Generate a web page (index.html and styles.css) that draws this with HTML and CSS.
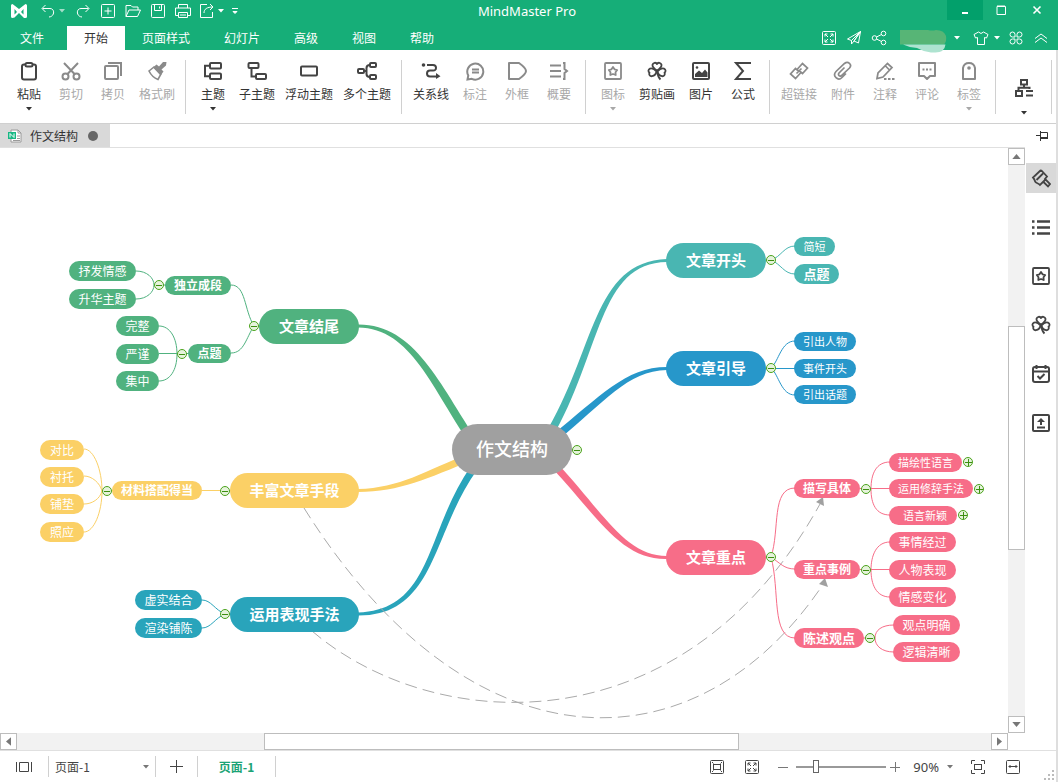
FILE: index.html
```html
<!DOCTYPE html>
<html lang="zh-CN">
<head>
<meta charset="utf-8">
<title>MindMaster Pro</title>
<link rel="stylesheet" href="styles.css">
</head>
<body>
<svg class="defs" aria-hidden="true">
  <symbol id="caret" viewBox="0 0 6 4"><path d="M0 0h6L3 3.500z" fill="currentColor"/></symbol>
  <symbol id="clover" viewBox="0 0 20 20"><g fill="none" stroke="currentColor" stroke-width="1.800" stroke-linejoin="round"><path d="M10 9.500C7 7.500 5.200 5.500 5.500 3.800 6 1.500 9 1 10 3c1-2 4-1.500 4.500.8.300 1.700-1.500 3.700-4.500 5.700z"/><path d="M9.500 10.500C7 7.500 5 7 3 7.600 1 8.500 1 10.800 2.500 11.600 1.500 13.500 3 15.500 5 15.200c2.500-.4 4-2.200 4.500-4.700z"/><path d="M10.500 10.500C13 7.500 15 7 17 7.600c2 .9 2 3.200.5 4 1 1.900-.5 3.900-2.500 3.600-2.500-.4-4-2.200-4.500-4.700z"/><path d="M10 10c.5 3.500 1.500 6.500 3.500 8.500"/></g></symbol>
  <symbol id="starbox" viewBox="0 0 20 20"><g fill="none" stroke="currentColor" stroke-width="1.800" stroke-linejoin="round"><rect x="2" y="2" width="16" height="16" rx="1"/><path d="M10 6l1.500 2.300 2.700.7-1.700 2.200.2 2.800L10 13l-2.700 1 .2-2.800L5.800 9l2.700-.7z"/></g></symbol>
</svg>
<div class="app">
  <header class="header">
    <div class="titlebar">
      <div class="quick">
        <svg class="logo" viewBox="0 0 16 14"><path d="M1.500 0L8 5 14.500 0Q16 0 16 1.500V12.500Q16 14 14.500 14H13L8 9 3.500 13.500 1.500 14Q0 14 0 12.500V1.500Q0 0 1.500 0z" fill="#fff"/><path d="M3.500 5v5.500L6 8zM12.500 5v5.500L10 8z" fill="#16ae78"/></svg>
        <button class="q q-undo" aria-label="撤销"><svg viewBox="0 0 16 16"><path d="M5.500 2L2 5.500 5.500 9M2.500 5.500H10c5 0 5 8-1 8.500"/></svg></button>
        <button class="q q-caret dim" aria-label="撤销列表"><svg class="caret"><use href="#caret"/></svg></button>
        <button class="q q-redo" aria-label="重做"><svg viewBox="0 0 16 16"><path d="M10.500 2L14 5.500 10.500 9M13.500 5.500H6c-5 0-5 8 1 8.500"/></svg></button>
        <button class="q" aria-label="新建"><svg viewBox="0 0 16 16"><rect x="1.500" y="1.500" width="13" height="13" rx="1"/><path d="M8 4.500v7M4.500 8h7"/></svg></button>
        <button class="q" aria-label="打开"><svg viewBox="0 0 16 16"><path d="M1 13.500v-11h5L7.500 4H13v3M1 13.500L4 7h11.500l-3 6.500z"/></svg></button>
        <button class="q" aria-label="保存"><svg viewBox="0 0 16 16"><rect x="1.500" y="1.500" width="13" height="13" rx="1"/><path d="M4.500 1.500v6h7v-6M9.500 3.500v2"/></svg></button>
        <button class="q" aria-label="打印"><svg viewBox="0 0 16 16"><path d="M3.500 5V1.500h9V5M3.500 12.500h-3V5h15v7.500h-3M3.500 9.500h9v5h-9zM5 12h6"/></svg></button>
        <button class="q q-share" aria-label="导出"><svg viewBox="0 0 16 16"><path d="M8 1.500H1.500v13h12V9M5 10c0-4 3-6 9-6M11 1l3 3-3 3"/></svg></button>
        <button class="q q-caret" aria-label="导出列表"><svg class="caret"><use href="#caret"/></svg></button>
        <button class="q q-more" aria-label="自定义"><svg viewBox="0 0 6 7"><path d="M0 .5h6M1 3.500h4L3 5.500z" fill="#fff"/></svg></button>
      </div>
      <h1 class="title">MindMaster Pro</h1>
      <div class="window-buttons">
        <button class="wb wb-min" aria-label="最小化"><svg viewBox="0 0 12 12"><path d="M3 9h6" stroke-width="2"/></svg></button>
        <button class="wb" aria-label="最大化"><svg viewBox="0 0 12 12"><path d="M2 2.500h8.500v8H2z"/><path d="M2 2h8" /></svg></button>
        <button class="wb" aria-label="关闭"><svg viewBox="0 0 12 12"><path d="M2.500 2.500l7 7M9.500 2.500l-7 7" stroke-width="1.600"/></svg></button>
      </div>
    </div>
    <div class="menubar">
      <nav class="menus">
        <a class="menu menu-file" href="#file">文件</a>
        <a class="menu active" href="#start">开始</a>
        <a class="menu" href="#style">页面样式</a>
        <a class="menu" href="#slides">幻灯片</a>
        <a class="menu" href="#advanced">高级</a>
        <a class="menu" href="#view">视图</a>
        <a class="menu" href="#help">帮助</a>
      </nav>
      <div class="account">
        <button class="q" aria-label="全屏"><svg viewBox="0 0 16 16"><rect x="1.500" y="1.500" width="13" height="13" rx="1"/><path d="M4 6.500V4h2.500M9.500 4H12v2.500M12 9.500V12H9.500M6.500 12H4V9.500M4 4l3 3M12 4L9 7M12 12L9 9M4 12l3-3"/></svg></button>
        <button class="q" aria-label="发送"><svg viewBox="0 0 16 16"><path d="M14.500 1.500L1.500 9l4 1.500zM14.500 1.500L12.500 13 8 11zM5.500 10.500V14L8 11l6.500-9.500"/></svg></button>
        <button class="q" aria-label="分享"><svg viewBox="0 0 16 16"><circle cx="3.500" cy="8" r="2.300"/><circle cx="12.500" cy="3.500" r="2.300"/><circle cx="12.500" cy="12.500" r="2.300"/><path d="M5.500 7l5-2.500M5.500 9l5 2.500"/></svg></button>
        <button class="user" aria-label="用户"><svg viewBox="0 0 48 24"><path d="M0 1h28q4 1 8 0 8 0 10 6 1 5-2 8.500H0z" fill="#57b576"/><path d="M3 15.500h42.500q-1 8-10 8H31q-8-1-14-4.500-8-.5-14-3.500z" fill="#aee3d0"/></svg></button>
        <button class="q q-caret" aria-label="用户菜单"><svg class="caret"><use href="#caret"/></svg></button>
        <button class="q q-skin" aria-label="皮肤"><svg viewBox="0 0 16 16"><path d="M5.500 2L1 4.500 2.500 8l2-.5v7h7v-7l2 .5L15 4.500 10.500 2Q8 5 5.500 2z"/></svg></button>
        <button class="q q-caret" aria-label="皮肤菜单"><svg class="caret"><use href="#caret"/></svg></button>
        <button class="q q-apps" aria-label="应用"><svg viewBox="0 0 16 16"><path d="M7 7H4.500A2.500 2.500 0 1 1 7 4.500zM9 7h2.500A2.500 2.500 0 1 0 9 4.500zM7 9H4.500A2.500 2.500 0 1 0 7 11.500zM9 9h2.500A2.500 2.500 0 1 1 9 11.500z"/></svg></button>
        <button class="q" aria-label="折叠功能区"><svg viewBox="0 0 16 16"><path d="M2 8.500L8 4l6 4.500M2 12.500L8 8l6 4.500"/></svg></button>
      </div>
    </div>
  </header>

  <div class="body">
    <div class="ribbon">
      <div class="group">
        <button class="tool"><svg class="ico" viewBox="0 0 20 20"><rect x="3" y="3.500" width="14" height="15" rx="2"/><rect x="6.500" y="2" width="7" height="3.500" rx="1.500" fill="#fff"/></svg><span>粘贴</span><svg class="caret"><use href="#caret"/></svg></button>
        <button class="tool off"><svg class="ico" viewBox="0 0 20 20"><circle cx="4.500" cy="15.500" r="3"/><circle cx="15.500" cy="15.500" r="3"/><path d="M3 2l10.500 11M17 2L6.500 13"/></svg><span>剪切</span></button>
        <button class="tool off"><svg class="ico" viewBox="0 0 20 20"><rect x="2" y="5" width="13" height="13" rx="1"/><path d="M5 2h13v13"/></svg><span>拷贝</span></button>
        <button class="tool w3 off"><svg class="ico" viewBox="0 0 20 20"><path d="M2 10L7 6l7 7-3 5.500C7 17 4 14 2 10z" stroke-width="1.600"/><path d="M6 6.500l3.500-3 2.500 2 4-4.500h3.500L19 4.500l-4.500 4 2 2-3 4z" fill="currentColor" stroke="none"/></svg><span>格式刷</span></button>
      </div>
      <div class="group">
        <button class="tool"><svg class="ico" viewBox="0 0 20 20"><rect x="7" y="2" width="11" height="5.500" rx="1"/><rect x="7" y="12.500" width="11" height="5.500" rx="1"/><path d="M7 4.800H2v10.400h5"/></svg><span>主题</span><svg class="caret"><use href="#caret"/></svg></button>
        <button class="tool w3"><svg class="ico" viewBox="0 0 20 20"><rect x="1.500" y="2" width="10" height="5" rx="1"/><rect x="9" y="13" width="10" height="5" rx="1"/><path d="M4.500 7v8.500H9"/></svg><span>子主题</span></button>
        <button class="tool w4"><svg class="ico" viewBox="0 0 20 20"><rect x="2" y="5.500" width="16" height="9" rx="1"/></svg><span>浮动主题</span></button>
        <button class="tool w4"><svg class="ico" viewBox="0 0 20 20"><rect x="1" y="8" width="6" height="4" rx="1"/><rect x="13" y="2" width="6" height="4" rx="1"/><rect x="13" y="14" width="6" height="4" rx="1"/><path d="M7 10h2.500M13 4q-3.500 0-3.500 3v6q0 3 3.500 3"/></svg><span>多个主题</span></button>
      </div>
      <div class="group">
        <button class="tool w3"><svg class="ico" viewBox="0 0 20 20"><circle cx="2.500" cy="4" r="1.800" fill="currentColor" stroke="none"/><path d="M6 4h6q3 0 3 2.800T12 9.500H9q-3 0-3 3T9 15.500h6"/><path d="M15 12l4.500 3.300L15 18z" fill="currentColor" stroke="none"/></svg><span>关系线</span></button>
        <button class="tool off"><svg class="ico" viewBox="0 0 20 20"><path d="M2.500 18.500l.8-4a8 8 0 1 1 3.500 3.300zM7 8.500h7M7 11.500h7"/></svg><span>标注</span></button>
        <button class="tool off"><svg class="ico" viewBox="0 0 20 20"><path d="M2 2h10q7 5 7 8t-7 8H2z" stroke-linejoin="round"/></svg><span>外框</span></button>
        <button class="tool off"><svg class="ico" viewBox="0 0 20 20"><path d="M1 4.500h11M1 10h11M1 15.500h11M14 2h1.500v6l2.500 2-2.500 2v6H14"/></svg><span>概要</span></button>
      </div>
      <div class="group">
        <button class="tool off"><svg class="ico"><use href="#starbox"/></svg><span>图标</span><svg class="caret"><use href="#caret"/></svg></button>
        <button class="tool w3"><svg class="ico"><use href="#clover"/></svg><span>剪贴画</span></button>
        <button class="tool"><svg class="ico" viewBox="0 0 20 20"><rect x="2" y="2" width="16" height="16" rx="1"/><circle cx="6" cy="6.500" r="1.300" fill="currentColor" stroke="none"/><path d="M4 16v-3l4-3.500 3 2.500 3-3.500 2.500 3V16z" fill="currentColor" stroke="none"/></svg><span>图片</span></button>
        <button class="tool"><svg class="ico" viewBox="0 0 20 20"><path d="M18 2H3l7 8-7 8h15"/></svg><span>公式</span></button>
      </div>
      <div class="group">
        <button class="tool w3 off"><svg class="ico" viewBox="0 0 20 20"><path d="M8.500 8L13.500 2.500l5 4.500-5 5.500-3-2.500M11.500 12L6.500 17.500l-5-4.500 5-5.500 3 2.500M7.500 12.500l5-5" stroke-width="1.700"/></svg><span>超链接</span></button>
        <button class="tool off"><svg class="ico" viewBox="0 0 20 20"><path d="M11.500 6.500L6 12c-1.500 2 .8 4 2.500 2.500l8-7.500c3-3.500-1.500-7.500-5-4.500L3 10.500c-4 4.500 2 10 6 6L13 12.500" stroke-width="1.700"/></svg><span>附件</span></button>
        <button class="tool off"><svg class="ico" viewBox="0 0 20 20"><path d="M2 17.500l1-5.500L12.500 2.500l4.500 4L8 16zM10.500 5l4 4" stroke-width="1.700"/><path d="M9 18h2.500M13 18h2.500M17 18h2.500"/></svg><span>注释</span></button>
        <button class="tool off"><svg class="ico" viewBox="0 0 20 20"><path d="M2 2h16v13h-5l-3 3-3-3H2z" stroke-linejoin="round"/><path d="M5.500 8.500h2M9 8.500h2M12.500 8.500h2"/></svg><span>评论</span></button>
        <button class="tool off"><svg class="ico" viewBox="0 0 20 20"><path d="M4 18V7q1-5 6-5t6 5v11z" stroke-linejoin="round"/><circle cx="10" cy="7" r="1.800" fill="currentColor" stroke="none"/></svg><span>标签</span><svg class="caret"><use href="#caret"/></svg></button>
      </div>
      <div class="group">
        <button class="tool tool-layout" aria-label="布局"><svg class="ico" viewBox="0 0 20 20"><rect x="7" y="2" width="6" height="4.500"/><rect x="2" y="13" width="6" height="5"/><path d="M10 6.500v3M4.500 13V9.800h11V11M12 13h7M12 17.500h7"/></svg><svg class="caret"><use href="#caret"/></svg></button>
      </div>
    </div>

    <div class="workspace">
      <div class="doc-tabs">
        <button class="doc-tab"><svg class="doc-icon" viewBox="0 0 14 14"><path d="M3 1h7l3 3v9H3z" fill="#fff" stroke="#9a9a9a"/><path d="M10 1v3h3M9 7h3M9 9.500h3M5 11.500h7" fill="none" stroke="#9a9a9a"/><rect x="0" y="3" width="8" height="7" fill="#17b884"/><path d="M2 8.500v-4l4 4v-4" fill="none" stroke="#fff"/></svg><span>作文结构</span><i class="dot"></i></button>
      </div>

      <main class="canvas">
        <svg class="links" viewBox="0 148 1008 585" aria-hidden="true">
          <g class="trunks">
            <path class="fill-green" d="M358 324.500C415 324 440 385 477 440L471 445C432 390 412 328 358 327.500z"/>
            <path class="fill-yellow" d="M358 489C400 488 425 471 470 453L473 460C428 478 400 492 358 492z"/>
            <path class="fill-cyan" d="M358 612.500C433 610 425 532 471 466L477 470C432 532 436 616 358 615.500z"/>
            <path class="fill-teal" d="M667 259C592 262 596 350 544 436L551 440C602 352 598 263 667 262z"/>
            <path class="fill-blue" d="M667 367C625 367 600 397 552 435L557 441C605 402 627 371 667 370z"/>
            <path class="fill-pink" d="M667 556C625 556 603 512 557 463L552 468C598 517 621 560 667 559z"/>
          </g>
          <g class="relations">
            <path d="M304 508C470 773 695 773 822 586"/>
            <path d="M312 631C432 734 683 752 820 504"/>
          </g>
          <path class="arrows" d="M825 578l3 9-9-3zM823 497l1 9-8-4z"/>
          <g class="stroke-green"><path d="M136 271C147 271 154 278 154 285C154 292 147 299 136 299M159 285h8M231 285C246 285 244 310 254 326C246 338 244 353 231 353M159 326C170 326 177 338 177 354C177 370 170 381 159 381M159 353.500h30M254 326h6"/></g>
          <g class="stroke-yellow"><path d="M84 449C94 449 102 470 102 491C102 512 94 532 84 532M84 476C92 476 100 483 102 491C100 499 92 504 84 504M102 490.500h12M202 490.500h30"/></g>
          <g class="stroke-cyan"><path d="M202 600C211 600 215 610 225 614C215 618 211 628 202 628M225 614h8"/></g>
          <g class="stroke-teal"><path d="M795 246C784 246 781 257 771 260C781 264 784 274 795 274"/></g>
          <g class="stroke-blue"><path d="M795 341C781 341 779 361 771 368C779 375 781 395 795 395M766 368.500h30"/></g>
          <g class="stroke-pink"><path d="M795 488C771 488 780 530 771 557C780 590 771 638 795 638M771 557C780 563 784 569 795 569M860 488.500h30M890 462C876 462 871 474 871 489C871 504 876 515 890 515M860 569.500h30M890 542C876 542 871 556 871 570C871 584 876 597 890 597M864 638h11M894 625C882 625 875 630 875 638C875 646 882 652 894 652"/></g>
        </svg>

        <div class="node root at-root">作文结构</div>

        <div class="node main green at-ending">文章结尾</div>
        <div class="node sub green at-paragraph">独立成段</div>
        <div class="node leaf green at-feeling">抒发情感</div>
        <div class="node leaf green at-theme">升华主题</div>
        <div class="node sub green at-point">点题</div>
        <div class="node leaf green at-complete">完整</div>
        <div class="node leaf green at-rigor">严谨</div>
        <div class="node leaf green at-focus">集中</div>

        <div class="node main yellow at-enrich">丰富文章手段</div>
        <div class="node sub yellow at-material">材料搭配得当</div>
        <div class="node leaf yellow at-contrast">对比</div>
        <div class="node leaf yellow at-foil">衬托</div>
        <div class="node leaf yellow at-bedding">铺垫</div>
        <div class="node leaf yellow at-echo">照应</div>

        <div class="node main cyan at-technique">运用表现手法</div>
        <div class="node leaf cyan at-virtual">虚实结合</div>
        <div class="node leaf cyan at-render">渲染铺陈</div>

        <div class="node main teal at-opening">文章开头</div>
        <div class="node small teal at-short">简短</div>
        <div class="node strong teal at-topic">点题</div>

        <div class="node main blue at-guide">文章引导</div>
        <div class="node small blue at-person">引出人物</div>
        <div class="node small blue at-event">事件开头</div>
        <div class="node small blue at-subject">引出话题</div>

        <div class="node main pink at-key">文章重点</div>
        <div class="node sub pink at-concrete">描写具体</div>
        <div class="node small pink at-descriptive">描绘性语言</div>
        <div class="node small pink at-rhetoric">运用修辞手法</div>
        <div class="node small pink at-novel">语言新颖</div>
        <div class="node sub pink at-example">重点事例</div>
        <div class="node leaf pink at-process">事情经过</div>
        <div class="node leaf pink at-acting">人物表现</div>
        <div class="node leaf pink at-change">情感变化</div>
        <div class="node strong pink at-opinion">陈述观点</div>
        <div class="node leaf pink at-clear">观点明确</div>
        <div class="node leaf pink at-logic">逻辑清晰</div>

        <button class="fold fold-root" aria-label="折叠"></button>
        <button class="fold fold-paragraph" aria-label="折叠"></button>
        <button class="fold fold-ending" aria-label="折叠"></button>
        <button class="fold fold-point" aria-label="折叠"></button>
        <button class="fold fold-material" aria-label="折叠"></button>
        <button class="fold fold-enrich" aria-label="折叠"></button>
        <button class="fold fold-technique" aria-label="折叠"></button>
        <button class="fold fold-opening" aria-label="折叠"></button>
        <button class="fold fold-guide" aria-label="折叠"></button>
        <button class="fold fold-key" aria-label="折叠"></button>
        <button class="fold fold-concrete" aria-label="折叠"></button>
        <button class="fold fold-example" aria-label="折叠"></button>
        <button class="fold fold-opinion" aria-label="折叠"></button>
        <button class="fold plus fold-descriptive" aria-label="展开"></button>
        <button class="fold plus fold-rhetoric" aria-label="展开"></button>
        <button class="fold plus fold-novel" aria-label="展开"></button>
      </main>

      <div class="vscroll">
        <button class="arrow" aria-label="向上滚动"><svg viewBox="0 0 10 6"><path d="M0 6h10L5 0z"/></svg></button>
        <div class="v-before"></div><div class="thumb v-thumb"></div><div class="v-after"></div>
        <button class="arrow" aria-label="向下滚动"><svg viewBox="0 0 10 6"><path d="M0 0h10L5 6z"/></svg></button>
      </div>
      <div class="hscroll">
        <button class="arrow" aria-label="向左滚动"><svg viewBox="0 0 6 10"><path d="M6 0v10L0 5z"/></svg></button>
        <div class="h-before"></div><div class="thumb h-thumb"></div><div class="h-after"></div>
        <button class="arrow" aria-label="向右滚动"><svg viewBox="0 0 6 10"><path d="M0 0v10l6-5z"/></svg></button>
      </div>

      <aside class="side">
        <button class="pin" aria-label="固定"><svg viewBox="0 0 12 10"><path d="M0 4.500h4M4.500 0v10M4.500 1.500h7v6h-7"/><path d="M4 7h8" stroke-width="2"/></svg></button>
        <button class="panel on" aria-label="格式"><svg class="ico" viewBox="0 0 20 20"><path d="M10 2L2 9.500c1.500 1.500 1.500 3 2.500 4.500s3 1 4.500 3l5.500-5.500M10 2l6 6.500-2 2.500 5 5-2 2.500-5-5M12 5.500L5.500 12" stroke-width="1.800"/></svg></button>
        <button class="panel" aria-label="大纲"><svg class="ico" viewBox="0 0 20 20"><path d="M1 4.500h2.500M6 4.500h13M1 10.500h2.500M6 10.500h13M1 16.500h2.500M6 16.500h13" stroke-width="2.600"/></svg></button>
        <button class="panel" aria-label="图标"><svg class="ico"><use href="#starbox"/></svg></button>
        <button class="panel" aria-label="剪贴画"><svg class="ico"><use href="#clover"/></svg></button>
        <button class="panel" aria-label="任务"><svg class="ico" viewBox="0 0 20 20"><rect x="2" y="3" width="16" height="15" rx="2"/><path d="M2 7.500h16M5.500 1v4M14.500 1v4M6.500 12l2.500 2.500 4.500-4.500"/></svg></button>
        <button class="panel" aria-label="附件"><svg class="ico" viewBox="0 0 20 20"><rect x="2" y="2" width="16" height="16" rx="1"/><path d="M10 12V8M6 14.500h8"/><path d="M6 9l4-4 4 4z" fill="currentColor" stroke="none"/></svg></button>
      </aside>
    </div>

    <footer class="status">
      <div class="cell cell-view"><button class="s" aria-label="视图"><svg viewBox="0 0 16 16"><path d="M.5 3v10M15.500 3v10M3.500 3.500h9v9h-9z"/></svg></button></div>
      <div class="cell cell-page"><label class="page-picker"><select aria-label="页面"><option>页面-1</option></select><svg class="caret"><use href="#caret"/></svg></label></div>
      <div class="cell cell-add"><button class="s" aria-label="添加页面"><svg viewBox="0 0 16 16"><path d="M7.500 1v13M1 7.500h13"/></svg></button></div>
      <div class="cell cell-tab"><a class="page-tab" href="#page1">页面-1</a></div>
      <div class="zoom">
        <button class="s" aria-label="适应窗口"><svg viewBox="0 0 16 16"><rect x="1.500" y="1.500" width="13" height="13" rx="1"/><rect x="4.500" y="5.500" width="7" height="5"/><path d="M3 3l1.500 1.500M13 3l-1.500 1.500M3 13l1.500-1.500M13 13l-1.500-1.500"/></svg></button>
        <button class="s s-full" aria-label="全屏"><svg viewBox="0 0 16 16"><rect x="1.500" y="1.500" width="13" height="13" rx="1"/><path d="M4 6.500V4h2.500M9.500 4H12v2.500M12 9.500V12H9.500M6.500 12H4V9.500M4 4l3 3M12 4L9 7M12 12L9 9M4 12l3-3"/></svg></button>
        <button class="s s-step" aria-label="缩小"><svg viewBox="0 0 10 10"><path d="M0 5.500h10"/></svg></button>
        <input class="slider" type="range" min="0" max="100" value="20" aria-label="缩放">
        <button class="s s-step" aria-label="放大"><svg viewBox="0 0 10 10"><path d="M0 5.500h10M5.500 0v10"/></svg></button>
        <button class="percent"><span>90%</span><svg class="caret"><use href="#caret"/></svg></button>
        <button class="s s-fit" aria-label="适应页面"><svg viewBox="0 0 16 16"><path d="M1.500 5V1.500H5M11 1.500h3.500V5M14.500 11v3.500H11M5 14.500H1.500V11"/><rect x="4.500" y="5.500" width="7" height="5"/></svg></button>
        <button class="s s-width" aria-label="适应宽度"><svg viewBox="0 0 16 16"><rect x="1.500" y="1.500" width="13" height="13" rx="1"/><path d="M3.500 7.500h9M5 6v3M11 6v3"/></svg></button>
        <svg class="grip" viewBox="0 0 12 12"><path d="M9 0h2v2H9zM9 4h2v2H9zM9 8h2v2H9zM5 4h2v2H5zM5 8h2v2H5zM1 8h2v2H1z" fill="#bbb"/></svg>
      </div>
    </footer>
  </div>
</div>
</body>
</html>
```
FILE: styles.css
```css
* { box-sizing: border-box; }
html, body { height: 100%; }
body {
  margin: 0;
  font: 12px/16px "Noto Sans CJK SC", sans-serif;
  color: #333;
  background: #fff;
}
button {
  margin: 0;
  padding: 0;
  border: 0;
  background: none;
  color: inherit;
  font: inherit;
}
a { color: inherit; text-decoration: none; }
svg { display: block; flex: none; }
.defs { position: absolute; width: 0; height: 0; }
.caret { width: 6px; height: 4px; }
.app { display: flex; flex-direction: column; height: 100vh; overflow: hidden; }

/* Header */
.header { background: #16ae78; color: #fff; }
.titlebar { display: grid; grid-template-columns: 1fr auto 1fr; height: 26px; }
.quick { display: flex; align-items: center; height: 22px; padding-left: 11px; }
.logo { width: 16px; height: 14px; margin-right: 10px; }
.q {
  display: flex;
  align-items: center;
  justify-content: center;
  width: 25px;
  height: 22px;
}
.q svg { width: 16px; height: 16px; fill: none; stroke: #fff; stroke-width: 1; }
.q-undo { width: 22px; }
.q-redo { width: 24px; margin-left: 6px; }
.q-share { width: 23px; }
.q-caret { width: 6px; }
.q .caret { width: 6px; height: 4px; stroke: none; }
.dim { opacity: 0.6; }
.q-more { width: 6px; margin-left: 8px; }
.q-more svg { width: 6px; height: 7px; }
.title { margin: 0; padding-right: 4px; font: 13px/22px "Noto Sans", sans-serif; }
.window-buttons { display: flex; justify-content: flex-end; padding-right: 3px; }
.wb { display: flex; align-items: center; justify-content: center; width: 36px; height: 20px; }
.wb svg { width: 12px; height: 12px; fill: none; stroke: #fff; stroke-width: 1; }
.wb-min { background: #02a06b; }
.menubar { display: flex; justify-content: space-between; height: 24px; }
.menus { display: flex; }
.menu { padding: 0 17px; line-height: 24px; }
.menu-file { padding: 0 23px 0 20px; }
.active { background: #fff; color: #333; }
.account { display: flex; align-items: center; padding-right: 5px; }
.user { width: 48px; height: 18px; margin: 0 6px 0 9px; }
.user svg { width: 48px; height: 24px; }
.q-skin { margin-left: 8px; width: 26px; }
.q-apps { margin-left: 4px; width: 24px; }

/* Ribbon */
.body {
  display: flex;
  flex: 1;
  flex-direction: column;
  min-height: 0;
  border-right: 2px solid #dedede;
}
.ribbon { display: flex; height: 74px; padding: 10px 0 9px 2px; border-bottom: 1px solid #d0d0d0; }
.group { display: flex; padding: 0 5px 0 6px; border-right: 1px solid #d0d0d0; }
.tool { display: flex; flex-direction: column; align-items: center; width: 42px; padding-top: 1px; }
.tool span { margin: 5px 0; }
.ico { width: 20px; height: 20px; fill: none; stroke: currentColor; stroke-width: 2; color: #444; }
.w3 { width: 46px; }
.w4 { width: 58px; }
.off { color: #a8a8a8; }
.off .ico { color: #8a8a8a; }
.tool-layout { width: 44px; padding-top: 18px; }
.tool-layout .caret { margin-top: 13px; }

/* Workspace */
.workspace {
  display: grid;
  flex: 1;
  grid-template-columns: 1fr 17px 31px;
  grid-template-rows: 24px 1fr 17px;
  min-height: 0;
}
.doc-tabs { display: flex; grid-column: 1 / 3; border-bottom: 1px solid #e0e0e0; }
.doc-tab { display: flex; align-items: center; padding: 0 12px 0 8px; background: #d9d9d9; }
.doc-icon { width: 14px; height: 14px; margin-right: 8px; }
.dot { width: 10px; height: 10px; margin-left: 10px; border-radius: 50%; background: #666; }
.side {
  display: flex;
  flex-direction: column;
  grid-row: 1 / 4;
  grid-column: 3;
  gap: 19px;
  align-items: stretch;
  padding-left: 1px;
}
.pin { display: flex; justify-content: center; height: 20px; padding: 7px 0 0 2px; }
.pin svg { width: 12px; height: 10px; fill: none; stroke: #333; }
.panel { display: flex; align-items: center; justify-content: center; height: 30px; flex: none; }
.on { background: #d9d9d9; }

/* Scroll bars */
.vscroll { display: flex; flex-direction: column; background: #f2f2f2; }
.hscroll { display: flex; grid-column: 1; background: #f2f2f2; }
.arrow {
  display: flex;
  align-items: center;
  justify-content: center;
  width: 17px;
  height: 17px;
  flex: none;
  border: 1px solid #bdbdbd;
  background: #fff;
}
.arrow svg { fill: #777; }
.vscroll svg { width: 9px; height: 5px; }
.hscroll svg { width: 5px; height: 9px; }
.thumb { border: 1px solid #bdbdbd; background: #fff; }
.v-before { flex: 162; }
.v-thumb { flex: 222; }
.v-after { flex: 167; }
.h-before { flex: 247; }
.h-thumb { flex: 474; }
.h-after { flex: 253; }

/* Mind map */
.canvas { position: relative; overflow: hidden; }
.links { position: absolute; left: 0; top: 0; width: 1008px; height: 585px; fill: none; }
.relations { stroke: #aaa; stroke-dasharray: 12 6; }
.arrows { fill: #a0a0a0; }
.node {
  position: absolute;
  display: flex;
  align-items: center;
  justify-content: center;
  height: 20px;
  border-radius: 26px;
  color: #fff;
  white-space: nowrap;
}
.root { height: 51px; padding-bottom: 4px; background: #a0a0a0; font-size: 18px; font-weight: 500; }
.main { width: 100px; height: 35px; padding-bottom: 2px; font-size: 15px; font-weight: 700; }
.sub { height: 19px; padding-bottom: 2px; font-weight: 700; }
.strong { font-size: 13px; font-weight: 700; }
.small { height: 19px; padding-bottom: 2px; font-size: 11px; }
.green { background: #50b27f; }
.yellow { background: #fbd066; }
.cyan { background: #29a4bb; }
.teal { background: #49b6b2; }
.blue { background: #2797ca; }
.pink { background: #f76d88; }
.fill-green { fill: #50b27f; }
.fill-yellow { fill: #fbd066; }
.fill-cyan { fill: #29a4bb; }
.fill-teal { fill: #49b6b2; }
.fill-blue { fill: #2797ca; }
.fill-pink { fill: #f76d88; }
.stroke-green { stroke: #50b27f; }
.stroke-yellow { stroke: #fbd066; }
.stroke-cyan { stroke: #29a4bb; }
.stroke-teal { stroke: #49b6b2; }
.stroke-blue { stroke: #2797ca; }
.stroke-pink { stroke: #f76d88; }

.at-root { left: 452px; top: 276px; width: 120px; }
.at-ending { left: 259px; top: 161px; }
.at-paragraph { left: 165px; top: 128px; width: 66px; }
.at-feeling { left: 69px; top: 113px; width: 67px; }
.at-theme { left: 69px; top: 141px; width: 67px; }
.at-point { left: 188px; top: 196px; width: 43px; }
.at-complete { left: 116px; top: 168px; width: 43px; }
.at-rigor { left: 116px; top: 196px; width: 43px; }
.at-focus { left: 116px; top: 223px; width: 43px; }
.at-enrich { left: 230px; top: 325px; width: 129px; }
.at-material { left: 112px; top: 333px; width: 90px; }
.at-contrast { left: 40px; top: 292px; width: 44px; }
.at-foil { left: 40px; top: 319px; width: 44px; }
.at-bedding { left: 40px; top: 346px; width: 44px; }
.at-echo { left: 40px; top: 374px; width: 44px; }
.at-technique { left: 230px; top: 449px; width: 129px; }
.at-virtual { left: 135px; top: 442px; width: 67px; }
.at-render { left: 135px; top: 470px; width: 67px; }
.at-opening { left: 666px; top: 95px; }
.at-short { left: 794px; top: 89px; width: 41px; }
.at-topic { left: 794px; top: 116px; width: 45px; }
.at-guide { left: 666px; top: 203px; }
.at-person { left: 794px; top: 184px; width: 62px; }
.at-event { left: 794px; top: 211px; width: 62px; }
.at-subject { left: 794px; top: 237px; width: 62px; }
.at-key { left: 666px; top: 392px; }
.at-concrete { left: 794px; top: 331px; width: 66px; }
.at-descriptive { left: 889px; top: 305px; width: 73px; }
.at-rhetoric { left: 889px; top: 331px; width: 84px; }
.at-novel { left: 889px; top: 358px; width: 68px; padding-left: 4px; }
.at-example { left: 794px; top: 412px; width: 66px; }
.at-process { left: 889px; top: 384px; width: 67px; }
.at-acting { left: 889px; top: 412px; width: 67px; }
.at-change { left: 889px; top: 439px; width: 67px; }
.at-opinion { left: 794px; top: 480px; width: 70px; }
.at-clear { left: 893px; top: 467px; width: 67px; }
.at-logic { left: 893px; top: 494px; width: 67px; }

/* Branch toggles */
.fold {
  position: absolute;
  width: 10px;
  height: 10px;
  border: 1px solid #4ba31c;
  border-radius: 50%;
  background:
    linear-gradient(#3d8f12, #3d8f12) 1px 4px / 6px 1px no-repeat,
    #e6f3dc;
}
.plus {
  background:
    linear-gradient(#3d8f12, #3d8f12) 1px 4px / 7px 1px no-repeat,
    linear-gradient(#3d8f12, #3d8f12) 4px 1px / 1px 7px no-repeat,
    #e6f3dc;
}
.fold-root { left: 572px; top: 297px; }
.fold-paragraph { left: 154px; top: 132px; }
.fold-ending { left: 249px; top: 173px; }
.fold-point { left: 177px; top: 201px; }
.fold-material { left: 102px; top: 338px; }
.fold-enrich { left: 220px; top: 338px; }
.fold-technique { left: 220px; top: 461px; }
.fold-opening { left: 766px; top: 107px; }
.fold-guide { left: 766px; top: 215px; }
.fold-key { left: 766px; top: 404px; }
.fold-concrete { left: 861px; top: 336px; }
.fold-example { left: 861px; top: 417px; }
.fold-opinion { left: 865px; top: 485px; }
.fold-descriptive { left: 963px; top: 309px; }
.fold-rhetoric { left: 974px; top: 336px; }
.fold-novel { left: 958px; top: 362px; }

/* Status bar */
.status { display: flex; align-items: center; height: 32px; border-top: 1px solid #e0e0e0; color: #444; }
.cell { display: flex; align-items: center; justify-content: center; height: 21px; border-right: 1px solid #d0d0d0; }
.s { display: flex; align-items: center; justify-content: center; width: 16px; height: 20px; }
.s svg { width: 16px; height: 16px; fill: none; stroke: #444; }
.cell-view { width: 49px; }
.cell-page { width: 107px; }
.cell-add { width: 42px; }
.cell-tab { width: 78px; }
.page-picker { display: grid; align-items: center; width: 94px; }
.page-picker select {
  grid-area: 1 / 1;
  padding: 0;
  border: 0;
  appearance: none;
  background: none;
  color: #444;
  font: inherit;
}
.page-picker .caret { grid-area: 1 / 1; justify-self: end; color: #777; pointer-events: none; }
.page-tab { color: #1aa375; font-weight: 700; }
.zoom { display: flex; align-items: center; height: 31px; margin-left: auto; }
.s-full { margin: 0 18px 0 19px; }
.s-step, .s-step svg { width: 10px; }
.s-step svg { height: 10px; stroke: #777; }
.slider { width: 90px; height: 14px; margin: 0 4px 0 8px; appearance: none; background: none; }
.slider::-webkit-slider-runnable-track { height: 2px; background: #999; }
.slider::-webkit-slider-thumb {
  width: 6px;
  height: 13px;
  margin-top: -6px;
  border: 1px solid #666;
  appearance: none;
  background: #fff;
}
.percent { display: flex; align-items: center; gap: 8px; margin-left: 13px; font: 13px/16px "Noto Sans", sans-serif; }
.percent .caret { color: #777; }
.s-fit { margin: 0 19px 0 17px; }
.grip { width: 12px; height: 12px; margin: 0 1px 0 22px; align-self: flex-end; }
```
